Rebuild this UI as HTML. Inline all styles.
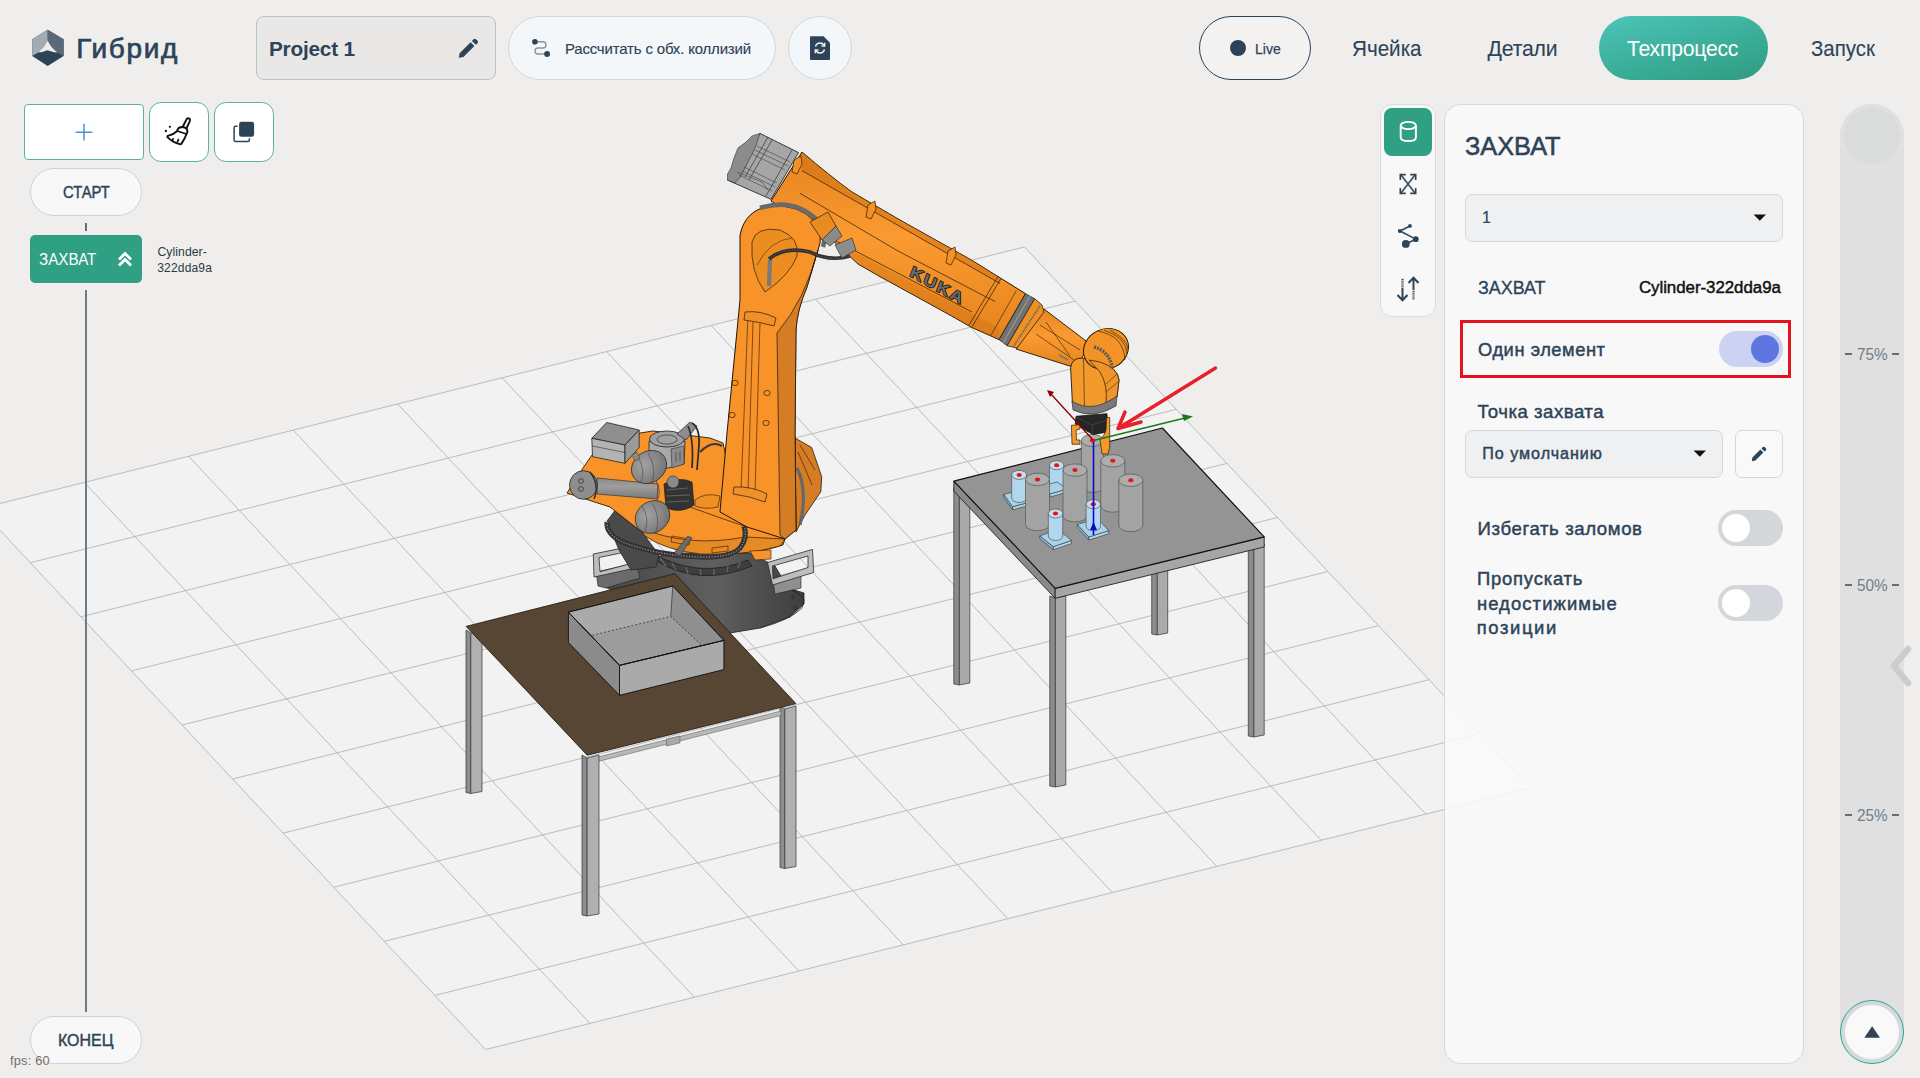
<!DOCTYPE html>
<html><head><meta charset="utf-8"><style>
*{margin:0;padding:0;box-sizing:border-box}
html,body{width:1920px;height:1078px;overflow:hidden;background:#efeeec;font-family:"Liberation Sans",sans-serif;color:#2d4358}
.abs{position:absolute}
#scene{position:absolute;left:0;top:0;width:1920px;height:1078px}
.t{position:absolute;white-space:nowrap;line-height:1}

</style></head><body>
<svg id="scene" width="1920" height="1078" viewBox="0 0 1920 1078">
<polygon points="-20.2,508.6 1024.5,247.0 1530.2,787.9 485.5,1049.5" fill="#f2f2f2"/>
<path d="M-20.2,508.6L1024.5,247.0M-20.2,508.6L485.5,1049.5M30.4,562.7L1075.1,301.1M84.3,482.4L590.0,1023.3M80.9,616.8L1125.6,355.2M188.7,456.3L694.4,997.2M131.5,670.9L1176.2,409.3M293.2,430.1L798.9,971.0M182.1,725.0L1226.8,463.4M397.7,404.0L903.4,944.9M232.7,779.0L1277.3,517.5M502.2,377.8L1007.9,918.7M283.2,833.1L1327.9,571.5M606.6,351.6L1112.3,892.5M333.8,887.2L1378.5,625.6M711.1,325.5L1216.8,866.4M384.4,941.3L1429.1,679.7M815.6,299.3L1321.3,840.2M434.9,995.4L1479.6,733.8M920.0,273.2L1425.7,814.1M485.5,1049.5L1530.2,787.9M1024.5,247.0L1530.2,787.9" stroke="#b4b4b4" stroke-width="0.9" fill="none"/>
<polygon points="1151.7,560.0 1157.3,562.0 1157.3,635.0 1151.7,634.0" fill="#8c8c8c" stroke="#333" stroke-width="0.7" stroke-linejoin="round" />
<polygon points="1157.3,562.0 1167.7,560.0 1167.7,633.0 1157.3,635.0" fill="#aaaaaa" stroke="#333" stroke-width="0.7" stroke-linejoin="round" />
<polygon points="953.8,488.0 959.4,490.0 959.4,685.0 953.8,684.0" fill="#8c8c8c" stroke="#333" stroke-width="0.7" stroke-linejoin="round" />
<polygon points="959.4,490.0 969.8,488.0 969.8,683.0 959.4,685.0" fill="#aaaaaa" stroke="#333" stroke-width="0.7" stroke-linejoin="round" />
<polygon points="1248.3,544.0 1253.9,546.0 1253.9,737.0 1248.3,736.0" fill="#8c8c8c" stroke="#333" stroke-width="0.7" stroke-linejoin="round" />
<polygon points="1253.9,546.0 1264.2,544.0 1264.2,735.0 1253.9,737.0" fill="#aaaaaa" stroke="#333" stroke-width="0.7" stroke-linejoin="round" />
<polygon points="1049.8,596.0 1055.4,598.0 1055.4,787.0 1049.8,786.0" fill="#8c8c8c" stroke="#333" stroke-width="0.7" stroke-linejoin="round" />
<polygon points="1055.4,598.0 1065.8,596.0 1065.8,785.0 1055.4,787.0" fill="#aaaaaa" stroke="#333" stroke-width="0.7" stroke-linejoin="round" />
<polygon points="953.8,481.1 1055.2,588.3 1055.2,598.3 953.8,491.1" fill="#8a8a8a" stroke="#222" stroke-width="0.9" stroke-linejoin="round" />
<polygon points="1055.2,588.3 1264.2,536.9 1264.2,546.9 1055.2,598.3" fill="#a6a6a6" stroke="#222" stroke-width="0.9" stroke-linejoin="round" />
<polygon points="953.8,481.1 1162.4,428.0 1264.2,536.9 1055.2,588.3" fill="#949494" stroke="#111" stroke-width="1.2" stroke-linejoin="round" />
<defs></defs>
<path d="M1081.4,440.4 L1081.4,486.4 A11.0,6.0 0 0 0 1103.4,486.4 L1103.4,440.4 Z" fill="#a3a3a3" stroke="#555" stroke-width="0.7" stroke-linejoin="round" />
<ellipse cx="1092.4" cy="440.4" rx="11.0" ry="6.0" fill="#adadad" stroke="#555" stroke-width="0.7"/>
<ellipse cx="1092.4" cy="440.4" rx="2.6" ry="2" fill="#e8121b"/>
<defs></defs>
<path d="M1049.4,465.2 L1049.4,488.2 A7.2,4.5 0 0 0 1063.8,488.2 L1063.8,465.2 Z" fill="#b0d7ee" stroke="#555" stroke-width="0.7" stroke-linejoin="round" />
<ellipse cx="1056.6" cy="465.2" rx="7.2" ry="4.5" fill="#bfe0f2" stroke="#555" stroke-width="0.7"/>
<ellipse cx="1056.6" cy="465.2" rx="2.6" ry="2" fill="#e8121b"/>
<polygon points="1040.0,486.5 1050.0,494.0 1050.0,497.0 1040.0,489.5" fill="#8fb8d0" stroke="#333" stroke-width="0.6" stroke-linejoin="round" />
<polygon points="1050.0,494.0 1067.0,489.0 1067.0,492.0 1050.0,497.0" fill="#b4daee" stroke="#333" stroke-width="0.6" stroke-linejoin="round" />
<polygon points="1040.0,486.5 1057.0,482.0 1067.0,489.0 1050.0,494.0" fill="#a9d1e8" stroke="#333" stroke-width="0.6" stroke-linejoin="round" />
<defs></defs>
<path d="M1100.8,460.8 L1100.8,506.0 A12.0,6.2 0 0 0 1124.8,506.0 L1124.8,460.8 Z" fill="#a3a3a3" stroke="#555" stroke-width="0.7" stroke-linejoin="round" />
<ellipse cx="1112.8" cy="460.8" rx="12.0" ry="6.2" fill="#adadad" stroke="#555" stroke-width="0.7"/>
<ellipse cx="1112.8" cy="460.8" rx="2.6" ry="2" fill="#e8121b"/>
<defs></defs>
<path d="M1063.0,470.1 L1063.0,515.7 A12.0,6.2 0 0 0 1087.0,515.7 L1087.0,470.1 Z" fill="#a3a3a3" stroke="#555" stroke-width="0.7" stroke-linejoin="round" />
<ellipse cx="1075.0" cy="470.1" rx="12.0" ry="6.2" fill="#adadad" stroke="#555" stroke-width="0.7"/>
<ellipse cx="1075.0" cy="470.1" rx="2.6" ry="2" fill="#e8121b"/>
<polygon points="1003.8,494.4 1012.6,506.8 1012.6,509.8 1003.8,497.4" fill="#8fb8d0" stroke="#333" stroke-width="0.6" stroke-linejoin="round" />
<polygon points="1012.6,506.8 1030.0,502.0 1030.0,505.0 1012.6,509.8" fill="#b4daee" stroke="#333" stroke-width="0.6" stroke-linejoin="round" />
<polygon points="1003.8,494.4 1021.0,490.0 1030.0,502.0 1012.6,506.8" fill="#a9d1e8" stroke="#333" stroke-width="0.6" stroke-linejoin="round" />
<defs></defs>
<path d="M1011.7,474.9 L1011.7,498.0 A7.5,4.5 0 0 0 1026.7,498.0 L1026.7,474.9 Z" fill="#b0d7ee" stroke="#555" stroke-width="0.7" stroke-linejoin="round" />
<ellipse cx="1019.2" cy="474.9" rx="7.5" ry="4.5" fill="#bfe0f2" stroke="#555" stroke-width="0.7"/>
<ellipse cx="1019.2" cy="474.9" rx="2.6" ry="2" fill="#e8121b"/>
<defs></defs>
<path d="M1025.5,479.4 L1025.5,524.5 A12.0,6.2 0 0 0 1049.5,524.5 L1049.5,479.4 Z" fill="#a3a3a3" stroke="#555" stroke-width="0.7" stroke-linejoin="round" />
<ellipse cx="1037.5" cy="479.4" rx="12.0" ry="6.2" fill="#adadad" stroke="#555" stroke-width="0.7"/>
<ellipse cx="1037.5" cy="479.4" rx="2.6" ry="2" fill="#e8121b"/>
<defs></defs>
<path d="M1118.8,480.2 L1118.8,525.4 A12.0,6.2 0 0 0 1142.8,525.4 L1142.8,480.2 Z" fill="#a3a3a3" stroke="#555" stroke-width="0.7" stroke-linejoin="round" />
<ellipse cx="1130.8" cy="480.2" rx="12.0" ry="6.2" fill="#adadad" stroke="#555" stroke-width="0.7"/>
<ellipse cx="1130.8" cy="480.2" rx="2.6" ry="2" fill="#e8121b"/>
<polygon points="1077.3,524.5 1088.8,537.0 1088.8,540.0 1077.3,527.5" fill="#8fb8d0" stroke="#333" stroke-width="0.6" stroke-linejoin="round" />
<polygon points="1088.8,537.0 1108.7,530.7 1108.7,533.7 1088.8,540.0" fill="#b4daee" stroke="#333" stroke-width="0.6" stroke-linejoin="round" />
<polygon points="1077.3,524.5 1097.7,518.3 1108.7,530.7 1088.8,537.0" fill="#a9d1e8" stroke="#333" stroke-width="0.6" stroke-linejoin="round" />
<defs></defs>
<path d="M1086.1,504.2 L1086.1,526.3 A7.2,4.5 0 0 0 1100.5,526.3 L1100.5,504.2 Z" fill="#b0d7ee" stroke="#555" stroke-width="0.7" stroke-linejoin="round" />
<ellipse cx="1093.3" cy="504.2" rx="7.2" ry="4.5" fill="#bfe0f2" stroke="#555" stroke-width="0.7"/>
<ellipse cx="1093.3" cy="504.2" rx="2.6" ry="2" fill="#e8121b"/>
<polygon points="1039.8,536.0 1053.4,546.7 1053.4,549.7 1039.8,539.0" fill="#8fb8d0" stroke="#333" stroke-width="0.6" stroke-linejoin="round" />
<polygon points="1053.4,546.7 1071.5,540.5 1071.5,543.5 1053.4,549.7" fill="#b4daee" stroke="#333" stroke-width="0.6" stroke-linejoin="round" />
<polygon points="1039.8,536.0 1057.8,529.0 1071.5,540.5 1053.4,546.7" fill="#a9d1e8" stroke="#333" stroke-width="0.6" stroke-linejoin="round" />
<defs></defs>
<path d="M1048.3,513.5 L1048.3,536.0 A7.2,4.5 0 0 0 1062.7,536.0 L1062.7,513.5 Z" fill="#b0d7ee" stroke="#555" stroke-width="0.7" stroke-linejoin="round" />
<ellipse cx="1055.5" cy="513.5" rx="7.2" ry="4.5" fill="#bfe0f2" stroke="#555" stroke-width="0.7"/>
<ellipse cx="1055.5" cy="513.5" rx="2.6" ry="2" fill="#e8121b"/>
<defs><linearGradient id="baseg" x1="0" y1="0" x2="1" y2="0"><stop offset="0" stop-color="#3f3f3f"/><stop offset="0.6" stop-color="#5c5c5c"/><stop offset="1" stop-color="#3c3c3c"/></linearGradient><linearGradient id="armg" x1="0" y1="0" x2="0" y2="1"><stop offset="0" stop-color="#e6841e"/><stop offset="0.45" stop-color="#fa9a30"/><stop offset="1" stop-color="#e5841c"/></linearGradient></defs>
<defs><linearGradient id="pedg" x1="0" y1="0" x2="1" y2="0"><stop offset="0" stop-color="#474747"/><stop offset="0.55" stop-color="#5f5f5f"/><stop offset="0.8" stop-color="#4d4d4d"/><stop offset="1" stop-color="#3e3e3e"/></linearGradient></defs>
<path d="M605,587 L640,562 L672,553 L750,553 L775,566 L788,588 L804,593 L804,604 L790,617 L760,628 L730,633 L690,626 Z" fill="url(#pedg)" stroke="#1e1e1e" stroke-width="0.8" stroke-linejoin="round" />
<path d="M787,589 Q800,592 804,600 L802,608 Q790,620 760,628" fill="none" stroke="#222" stroke-width="0.8" stroke-linejoin="round" />
<circle cx="793" cy="597" r="1.6" fill="none" stroke="#222" stroke-width="0.6"/><circle cx="795" cy="608" r="1.6" fill="none" stroke="#222" stroke-width="0.6"/>
<path d="M652,553 Q700,580 748,560 L752,566 Q700,588 655,560 Z" fill="#3e3e3e" stroke="#1a1a1a" stroke-width="0.7" stroke-linejoin="round" />
<path d="M660,558 L666,566 M672,563 L676,570 M686,567 L688,574 M700,569 L701,575 M714,569 L714,575 M728,566 L727,572 M740,562 L738,568" fill="none" stroke="#666666" stroke-width="1.3" stroke-linejoin="round" />
<path d="M596,572 L636,563 L640,578 L606,588 L598,586 Z" fill="#6b6b6b" stroke="#222" stroke-width="0.6" stroke-linejoin="round" />
<path d="M593.3,554.0 L637.5,545.0 L638.0,567.5 L594.0,577.0 Z M599.0,557.5 L633.0,550.5 L633.0,563.0 L600.0,571.7 Z" fill="#bdbdbd" fill-rule="evenodd" stroke="#2a2a2a" stroke-width="0.8"/>
<path d="M773,581 L801,575 L801,588 L775,594 Z" fill="#8f8f8f" stroke="#222" stroke-width="0.6" stroke-linejoin="round" />
<path d="M767.5,562.5 L812.5,549.4 L813.7,572.5 L772.5,585.0 Z M772.5,566.0 L808.0,556.0 L808.0,567.5 L773.0,578.7 Z" fill="#bdbdbd" fill-rule="evenodd" stroke="#2a2a2a" stroke-width="0.8"/>
<path d="M607,521 L616,509 L631,512 L648,540 L659,555 L656,567 L631,570 L619,550 Z" fill="#4a4a4a" stroke="#1e1e1e" stroke-width="0.7" stroke-linejoin="round" />
<path d="M567,493 L583,468 L592,455 L640,433 L653,431 L710,438 L723,443 L740,520 L785,539 L783,545 Q760,553 727,553 L677,550 L643,533 L610,507 Z" fill="#f8932a" stroke="#2a1a08" stroke-width="0.9" stroke-linejoin="round" />
<path d="M795,438 L811.7,447.5 L821.7,476.7 L820.8,491.7 L805,515 L796,532 Z" fill="#d47d24" stroke="#2a1a08" stroke-width="0.8" stroke-linejoin="round" />
<path d="M797,468 Q808,490 800,525" fill="none" stroke="#666" stroke-width="3.2" stroke-linejoin="round" />
<path d="M800,445 L815,470 M798,452 L812,485" fill="none" stroke="#2a1a08" stroke-width="0.6" stroke-linejoin="round" />
<path d="M640,528 Q690,548 745,537 L785,539 L780,546 Q745,556 700,554 Q665,550 645,536 Z" fill="#e68a24" stroke="#2a1a08" stroke-width="0.7" stroke-linejoin="round" />
<path d="M672,536 L690,539 L689,545 L671,542 Z M712,548 L728,546 L728,551 L712,553 Z" fill="none" stroke="#2a1a08" stroke-width="0.6" stroke-linejoin="round" />
<path d="M750,551 L771,550 L771,559 L755,560 Z" fill="#f8932a" stroke="#2a1a08" stroke-width="0.6" stroke-linejoin="round" />
<path d="M607,522 Q606,535 625,543 Q660,556 700,557 Q730,558 740,548 Q748,538 744,526" fill="none" stroke="#333333" stroke-width="5.2" stroke-linejoin="round" />
<path d="M607,522 Q606,535 625,543 Q660,556 700,557 Q730,558 740,548 Q748,538 744,526" fill="none" stroke="#8a8a8a" stroke-width="1.4" stroke-linejoin="round" stroke-dasharray="1.2 1.6"/>
<path d="M674,553 L688,536 L692,538 L680,556 Z" fill="#6a6a6a" stroke="#222" stroke-width="0.5" stroke-linejoin="round" />
<path d="M664,484 Q680,476 692,482 L694,505 Q682,514 666,508 Z" fill="#333333" stroke="#111" stroke-width="0.6" stroke-linejoin="round" />
<path d="M690,507 Q720,518 747,527" fill="none" stroke="#2a1a08" stroke-width="0.7" stroke-linejoin="round" />
<path d="M695,500 Q705,492 720,496 L718,507 Q705,510 695,506 Z" fill="#ee8f26" stroke="#2a1a08" stroke-width="0.6" stroke-linejoin="round" />
<path d="M667,490 L688,488 M666,496 L690,495 M667,502 L689,501" fill="none" stroke="#777" stroke-width="0.7" stroke-linejoin="round" />
<polygon points="591.8,438.3 606.7,422.5 639.2,430.0 625.0,445.0" fill="#8f8f8f" stroke="#222" stroke-width="0.8" stroke-linejoin="round" />
<polygon points="591.8,438.3 625.0,445.0 625.0,463.3 592.5,456.7" fill="#b3b3b3" stroke="#222" stroke-width="0.8" stroke-linejoin="round" />
<path d="M592.2,446 L625,452.5" fill="none" stroke="#333" stroke-width="0.6" stroke-linejoin="round" />
<polygon points="625.0,445.0 639.2,430.0 639.2,447.5 625.0,463.3" fill="#9a9a9a" stroke="#222" stroke-width="0.8" stroke-linejoin="round" />
<path d="M649,441 L649,466 L660,470 L684,464 L685,441 Z" fill="#a9a9a9" stroke="#222" stroke-width="0.8" stroke-linejoin="round" />
<path d="M671,449 L684,446 L684,464 L672,468 Z" fill="#8c8c8c" stroke="#333" stroke-width="0.6" stroke-linejoin="round" />
<path d="M676,452 L676,462 M680,451 L680,461" fill="none" stroke="#333" stroke-width="0.6" stroke-linejoin="round" />
<ellipse cx="667" cy="439" rx="17.5" ry="8" fill="#a0a0a0" stroke="#222" stroke-width="0.8"/>
<ellipse cx="667" cy="439.5" rx="10" ry="4.6" fill="none" stroke="#333" stroke-width="0.7"/>
<path d="M677,434 L690,422 L697,426 L686,440 Z" fill="#8d8d8d" stroke="#222" stroke-width="0.7" stroke-linejoin="round" />
<path d="M692,423 Q700,428 699,445 L697,470 M688,426 Q694,440 692,468" fill="none" stroke="#2a2a2a" stroke-width="1.7" stroke-linejoin="round" />
<path d="M700,452 Q712,440 722,446" fill="none" stroke="#3a3a3a" stroke-width="2.2" stroke-linejoin="round" />
<defs><linearGradient id="tubeg" x1="0" y1="0" x2="0" y2="1"><stop offset="0" stop-color="#8a8a8a"/><stop offset="0.4" stop-color="#9e9e9e"/><stop offset="1" stop-color="#777"/></linearGradient></defs>
<path d="M597,478 L658,484 L657,499 L597,494 Z" fill="url(#tubeg)" stroke="#333" stroke-width="0.7" stroke-linejoin="round" />
<path d="M656,481 Q662,491 657,501" fill="none" stroke="#333" stroke-width="0.7" stroke-linejoin="round" />
<ellipse cx="583.5" cy="485" rx="14" ry="14.3" fill="#8e8e8e" stroke="#222" stroke-width="0.8"/>
<path d="M590,472 Q600,485 594,499" fill="none" stroke="#333" stroke-width="1.6" stroke-linejoin="round" />
<circle cx="581" cy="481" r="2.4" fill="none" stroke="#333" stroke-width="0.8"/><circle cx="581" cy="489" r="2.4" fill="none" stroke="#333" stroke-width="0.8"/>
<defs><radialGradient id="sph" cx="0.4" cy="0.35" r="0.75"><stop offset="0" stop-color="#a3a3a3"/><stop offset="1" stop-color="#707070"/></radialGradient></defs>
<ellipse cx="649" cy="467" rx="18.5" ry="15.5" transform="rotate(-35 649 467)" fill="url(#sph)" stroke="#333" stroke-width="0.8"/>
<path d="M638,457 Q646,470 641,482 M648,453 Q657,467 652,483" fill="none" stroke="#444" stroke-width="0.6" stroke-linejoin="round" />
<path d="M632,455 L637,452 L640,458 L635,461 Z" fill="#8a8a8a" stroke="#333" stroke-width="0.5" stroke-linejoin="round" />
<ellipse cx="652.5" cy="517" rx="18" ry="15.5" transform="rotate(-35 652.5 517)" fill="url(#sph)" stroke="#333" stroke-width="0.8"/>
<path d="M642,506 Q650,519 645,531 M652,503 Q661,517 656,532" fill="none" stroke="#444" stroke-width="0.6" stroke-linejoin="round" />
<circle cx="673" cy="482" r="6" fill="#8a8a8a" stroke="#333" stroke-width="0.7"/>
<path d="M802,152 Q830,176 852,192 L900,220 L971.4,260 L1001,278.4 L1025.5,293.7 L999,339.6 L971.4,327.3 L950,315.1 L880,276.6 L858,264 L830,238 L771,201 Z" fill="url(#armg)" stroke="#1f1408" stroke-width="1.0" stroke-linejoin="round" />
<path d="M802,152 Q830,176 852,192 L900,220 L971.4,260 L1001,278.4 L1000,283.5 L976.4,270 L801.9,170.6 Z" fill="#c96d12" stroke="none" stroke-width="0" stroke-linejoin="round" opacity="0.45"/>
<path d="M830,238 L890,271 L972,314 L999,328 L999,339.6 L971.4,327.3 L950,315.1 L880,276.6 L858,264 Z" fill="#c96d12" stroke="none" stroke-width="0" stroke-linejoin="round" opacity="0.35"/>
<path d="M801.9,170.6 L976.4,270 L1000,283.5" fill="none" stroke="#2a1a08" stroke-width="0.7" stroke-linejoin="round" />
<path d="M800,193.3 L898,251 L984.3,296 L995,301.5" fill="none" stroke="#2a1a08" stroke-width="0.7" stroke-linejoin="round" />
<path d="M800,222 L890,269 L972,312" fill="none" stroke="#2a1a08" stroke-width="0.7" stroke-linejoin="round" />
<path d="M1001,278.4 L972,326.8 M998,276.6 L969,325" fill="none" stroke="#2a1a08" stroke-width="0.7" stroke-linejoin="round" />
<path d="M1016.3,290.6 L990.8,335.5" fill="none" stroke="#2a1a08" stroke-width="0.6" stroke-linejoin="round" />
<path d="M792,172 L794,160 L801,156 L802,164 L797,174 Z" fill="#f39126" stroke="#2a1a08" stroke-width="0.7" stroke-linejoin="round" />
<path d="M866,217 L868,205 L875,201 L876,209 L871,219 Z" fill="#f39126" stroke="#2a1a08" stroke-width="0.7" stroke-linejoin="round" />
<path d="M946,263 L948,251 L955,247 L956,255 L951,265 Z" fill="#f39126" stroke="#2a1a08" stroke-width="0.7" stroke-linejoin="round" />
<polygon points="760.0,133.4 798.5,152.6 771.0,199.3 727.5,180.1" fill="#a6a6a6" stroke="#2a2a2a" stroke-width="0.9" stroke-linejoin="round" />
<path d="M760,133.4 L752,136 L746,142 L738,148 L734,158 L731,168 L727.5,174 L727.5,180.1 L735,183 L741,176 L748,162 L755,148 Z" fill="#8c8c8c" stroke="#333" stroke-width="0.6" stroke-linejoin="round" />
<path d="M757,146 L790,162 M755,150 L788,166 M752,154 L785,170 M744,167 L777,183 M742,171 L775,187 M739,175 L772,191" fill="none" stroke="#3a3a3a" stroke-width="0.55" stroke-linejoin="round" />
<path d="M768,137 L745,177 M772,140 L749,180 M792,150 L766,196" fill="none" stroke="#333" stroke-width="0.7" stroke-linejoin="round" />
<path d="M737,172 L762,182 L768,190" fill="none" stroke="#444" stroke-width="0.6" stroke-linejoin="round" />
<text x="0" y="0" transform="matrix(1.05,0.582,-0.368,0.93,909,275.8)" font-family="Liberation Sans" font-weight="bold" font-size="15.5" fill="#6a6a6a" stroke="#151515" stroke-width="1.5" paint-order="stroke" stroke-linejoin="round" letter-spacing="1.4">KUKA</text>
<polygon points="1025.5,293.7 1034.7,298.8 1007.1,345.7 999.0,339.6" fill="#727272" stroke="#222" stroke-width="0.8" stroke-linejoin="round" />
<path d="M1030,296 L1003,343" fill="none" stroke="#9a9a9a" stroke-width="1.2" stroke-linejoin="round" />
<polygon points="1044.0,309.0 1090.0,344.0 1076.0,368.0 1016.0,349.0" fill="url(#armg)" stroke="#1f1408" stroke-width="0.9" stroke-linejoin="round" />
<path d="M1040,325 L1080,350 M1036,334 L1074,360 M1046,322 L1070,356" fill="none" stroke="#2a1a08" stroke-width="0.6" stroke-linejoin="round" />
<path d="M1059,355 L1068,360" fill="none" stroke="#777" stroke-width="2" stroke-linejoin="round" />
<polygon points="1034.7,298.8 1042.0,305.0 1044.0,312.0 1017.0,348.0 1007.1,345.7" fill="#f09024" stroke="#222" stroke-width="0.8" stroke-linejoin="round" />
<path d="M1040,306 L1013,347" fill="none" stroke="#666" stroke-width="1.8" stroke-linejoin="round" stroke-dasharray="1.5 1"/>
<path d="M740,235 Q745,210 770,206 Q800,204 815,222 Q824,236 818,250 L807,287 Q797,310 796,330 L795,433 L796,530 L785,539 L747,527 L720,512 L727,433 L740,300 Z" fill="#f8932a" stroke="#1f1408" stroke-width="1.0" stroke-linejoin="round" />
<path d="M777,333 L780,535 L785,539 L796,530 L795,433 L796,330 Q797,310 807,287 L818,250 Q805,300 777,333 Z" fill="#d47d24" stroke="#1f1408" stroke-width="0.7" stroke-linejoin="round" />
<path d="M760,208 Q795,197 819,222 Q827,234 823,247" fill="none" stroke="#6a6a6a" stroke-width="4.5" stroke-linejoin="round" />
<path d="M752,242 Q756,226 780,230 Q800,238 797,256 Q790,275 765,292 Q750,272 752,242 Z" fill="#ec8d22" stroke="#2a1a08" stroke-width="0.7" stroke-linejoin="round" />
<path d="M757,265 Q770,240 792,238" fill="none" stroke="#2a1a08" stroke-width="0.5" stroke-linejoin="round" />
<path d="M748,315 L741,490 M753,322 L748,492 M760,322 L755,492" fill="none" stroke="#2a1a08" stroke-width="0.6" stroke-linejoin="round" />
<path d="M745,312 Q760,310 776,318 L774,326 Q760,322 744,320 Z" fill="#f0902a" stroke="#2a1a08" stroke-width="0.7" stroke-linejoin="round" />
<path d="M734,487 Q752,486 767,494 L765,502 Q750,496 733,494 Z" fill="#f0902a" stroke="#2a1a08" stroke-width="0.7" stroke-linejoin="round" />
<ellipse cx="735" cy="383" rx="3.2" ry="2.6" fill="none" stroke="#2a1a08" stroke-width="0.7"/>
<ellipse cx="732" cy="415" rx="3.2" ry="2.6" fill="none" stroke="#2a1a08" stroke-width="0.7"/>
<ellipse cx="767" cy="393" rx="3.2" ry="2.6" fill="none" stroke="#2a1a08" stroke-width="0.7"/>
<ellipse cx="766" cy="423" rx="3.2" ry="2.6" fill="none" stroke="#2a1a08" stroke-width="0.7"/>
<path d="M770,260 L769,286" fill="none" stroke="#7a7a7a" stroke-width="4.2" stroke-linejoin="round" />
<path d="M769,259 Q785,246 810,252 Q830,262 850,256" fill="none" stroke="#2e2e2e" stroke-width="3.6" stroke-linejoin="round" />
<path d="M769,259 Q785,246 810,252 Q830,262 850,256" fill="none" stroke="#777" stroke-width="1" stroke-linejoin="round" stroke-dasharray="1 1.5"/>
<path d="M835,245 L852,238 L856,250 L842,258 Z" fill="#8d8d8d" stroke="#333" stroke-width="0.7" stroke-linejoin="round" />
<path d="M810,222 L828,212 L836,226 L822,240 Z" fill="#e98a22" stroke="#2a1a08" stroke-width="0.7" stroke-linejoin="round" />
<path d="M822,240 L836,226 L842,236 L830,246 Z" fill="#8a8a8a" stroke="#222" stroke-width="0.6" stroke-linejoin="round" />
<path d="M1070.6,367.6 Q1072,358 1082,358 L1100,362 Q1118,368 1119,380 L1117,397 Q1108,408 1091,409 Q1074,407 1072.4,402.9 Z" fill="#f39a2c" stroke="#1f1408" stroke-width="0.9" stroke-linejoin="round" />
<ellipse cx="1106" cy="349" rx="23" ry="20" transform="rotate(-25 1106 349)" fill="#f39226" stroke="#1f1408" stroke-width="0.9"/>
<path d="M1098,331 Q1124,336 1125,360 M1104,330 Q1127,338 1127,354 M1110,330 Q1128,340 1128,350" fill="none" stroke="#2a1a08" stroke-width="0.6" stroke-linejoin="round" />
<path d="M1094,347 Q1112,352 1113,374" fill="none" stroke="#5a5a5a" stroke-width="3.4" stroke-linejoin="round" stroke-dasharray="2 1.1"/>
<path d="M1089,360 L1100,362 Q1118,368 1119,380 L1117,397 L1106,403 Q1108,385 1100,372 Z" fill="#ef9429" stroke="#1f1408" stroke-width="0.7" stroke-linejoin="round" />
<path d="M1083.5,359 L1084.5,408" fill="none" stroke="#2a1a08" stroke-width="0.6" stroke-linejoin="round" />
<path d="M1106,384 L1117,374 M1106,392 L1118,382" fill="none" stroke="#2a1a08" stroke-width="0.5" stroke-linejoin="round" />
<path d="M1072,401 Q1092,414 1117,396 L1116,406 Q1093,420 1073,410 Z" fill="#7a7a7a" stroke="#333" stroke-width="0.7" stroke-linejoin="round" />
<path d="M1076,416.3 L1107,413.7 L1107.8,432 L1092.9,434.5 L1075.3,424 Z" fill="#262626" stroke="#111" stroke-width="0.8" stroke-linejoin="round" />
<path d="M1076,417 L1092,425 L1107,420 M1092,425 L1093,434" fill="none" stroke="#4a4a4a" stroke-width="0.7" stroke-linejoin="round" />
<path d="M1071.4,425.4 L1080,424.5 L1080,429 L1076,430 L1076.5,440 L1080,440 L1080,444.2 L1072,444.2 Z" fill="#f39a2a" stroke="#2a1a08" stroke-width="0.7" stroke-linejoin="round" />
<path d="M1106.5,417.6 L1109.7,417.6 L1109.7,447 L1108,454 L1102,454 L1100,440 L1104,435 L1106,430 Z" fill="#f39a2a" stroke="#2a1a08" stroke-width="0.7" stroke-linejoin="round" />
<polygon points="466.0,630.0 470.8,633.0 470.8,793.5 466.0,792.5" fill="#8e8e8e" stroke="#333" stroke-width="0.7" stroke-linejoin="round" />
<polygon points="470.8,633.0 482.0,630.0 482.0,791.5 470.8,793.5" fill="#b0b0b0" stroke="#333" stroke-width="0.7" stroke-linejoin="round" />
<polygon points="780.0,706.0 784.8,709.0 784.8,868.5 780.0,867.5" fill="#8e8e8e" stroke="#333" stroke-width="0.7" stroke-linejoin="round" />
<polygon points="784.8,709.0 796.0,706.0 796.0,866.5 784.8,868.5" fill="#b0b0b0" stroke="#333" stroke-width="0.7" stroke-linejoin="round" />
<polygon points="598.0,757.0 781.0,711.0 781.0,715.5 598.0,761.5" fill="#b8b8b8" stroke="#555" stroke-width="0.5" stroke-linejoin="round" />
<polygon points="666.5,739.0 680.0,736.0 680.0,743.0 666.5,746.0" fill="#a8a8a8" stroke="#555" stroke-width="0.5" stroke-linejoin="round" />
<polygon points="582.0,755.0 587.1,758.0 587.1,916.0 582.0,915.0" fill="#8e8e8e" stroke="#333" stroke-width="0.7" stroke-linejoin="round" />
<polygon points="587.1,758.0 599.0,755.0 599.0,914.0 587.1,916.0" fill="#b0b0b0" stroke="#333" stroke-width="0.7" stroke-linejoin="round" />
<polygon points="466.1,626.4 674.9,573.6 795.9,703.6 587.2,755.2" fill="#574633" stroke="#2a2018" stroke-width="0.9" stroke-linejoin="round" />
<polygon points="568.4,612.2 672.8,586.1 723.9,640.4 619.5,665.4" fill="#9c9c9c" stroke="#111" stroke-width="0.9" stroke-linejoin="round" />
<polygon points="568.4,612.2 672.8,586.1 670.7,616.4 592.4,635.2" fill="#aaaaaa" stroke="none" stroke-width="0" stroke-linejoin="round" />
<polygon points="672.8,586.1 723.9,640.4 701.0,644.6 670.7,616.4" fill="#8f8f8f" stroke="none" stroke-width="0" stroke-linejoin="round" />
<path d="M592.4,635.2 L670.7,616.4 L701,644.6" fill="none" stroke="#222" stroke-width="0.7" stroke-linejoin="round" stroke-dasharray="2 2"/>
<path d="M672.8,586.1 L670.7,616.4" fill="none" stroke="#222" stroke-width="0.6" stroke-linejoin="round" />
<polygon points="568.4,612.2 619.5,665.4 619.5,695.3 568.4,642.5" fill="#8b8b8b" stroke="#111" stroke-width="0.9" stroke-linejoin="round" />
<polygon points="619.5,665.4 723.9,640.4 723.9,669.6 619.5,695.3" fill="#aaaaaa" stroke="#111" stroke-width="0.9" stroke-linejoin="round" />
<polygon points="568.4,612.2 672.8,586.1 723.9,640.4 619.5,665.4" fill="none" stroke="#111" stroke-width="1.0" stroke-linejoin="round" />
<path d="M1093.5,440.5 L1050,393" stroke="#8b0000" stroke-width="1.3"/>
<path d="M1047,390 L1054,392 L1050,397 Z" fill="#8b0000"/>
<path d="M1093.5,440.5 L1185,418" stroke="#1a7a1a" stroke-width="1.3"/>
<path d="M1193,416.5 L1182,414 L1184,421 Z" fill="#1a7a1a"/>
<path d="M1093.5,440.5 L1093.5,535" stroke="#0a0ad0" stroke-width="1.6"/>
<path d="M1093.5,522 L1090,530 L1097,530 Z" fill="#0a0ad0"/>
<circle cx="1093.5" cy="440.5" r="1.8" fill="#e01010"/>
<path d="M1215.5,368 L1118,428.5 M1118,428.5 L1125,412 M1118,428.5 L1141,422" stroke="#e8202a" stroke-width="3.5" stroke-linecap="round" fill="none"/>
</svg>
<!-- header -->
<svg class="abs" style="left:0;top:0" width="80" height="80" viewBox="0 0 80 80">
  <polygon points="47.7,29.8 63.6,39.2 63.6,56.1 47.7,65.9 32.2,56.1 32.2,39.2" fill="#2d4358"/>
  <path d="M47.7,29.8 L32.2,39.2 L32.2,56.1 L38.5,52.3 Q44.5,47 47.7,40.5 Z" fill="#a3acb4"/>
  <path d="M47.7,29.8 L63.6,39.2 L63.6,56.1 L57.3,52.6 Q50.5,47 47.7,40.5 Z" fill="#5b6a78"/>
  <path d="M47.7,40.5 Q44.5,47 38.5,52.3 L41.3,52.3 L47.5,50.2 L54,52.2 L57.3,52.6 Q50.5,47 47.7,40.5 Z" fill="#eeeeec"/>
</svg>
<div class="t" style="left:76.3px;top:35.3px;font-size:27.98px;letter-spacing:1.66px;font-weight:normal;color:#2d4358;-webkit-text-stroke:0.7px #2d4358;">Гибрид</div>
<div class="abs" style="left:256px;top:16px;width:240px;height:64px;border:1px solid #b9c3cb;border-radius:8px;background:#eae8e6"></div>
<div class="t" style="left:268.9px;top:39.3px;font-size:20.78px;letter-spacing:-0.20px;font-weight:bold;color:#2d4358;">Project 1</div>
<svg class="abs" style="left:458px;top:37px" width="22" height="22" viewBox="0 0 22 22"><path d="M0.8,20.8 L1.6,16.2 L12.6,5.2 L16.4,9 L5.4,20 Z M13.9,3.9 L15.6,2.2 Q16.8,1.2 18,2.2 L19.6,3.8 Q20.6,5 19.6,6.2 L17.8,7.8 Z" fill="#2d4358"/></svg>

<div class="abs" style="left:508px;top:16px;width:268px;height:64px;border:1px solid #d3d7db;border-radius:32px;background:#f4f7fa"></div>
<svg class="abs" style="left:528px;top:36px" width="26" height="24" viewBox="0 0 26 24">
  <path d="M7,5.8 L15,5.8 Q18,5.8 18,9 Q18,12 15,12 L10,12 Q7,12 7,15 Q7,18 10,18 L19,18" stroke="#8797a3" stroke-width="1.4" fill="none"/>
  <circle cx="6.9" cy="5.8" r="2.8" fill="#2d4358"/><circle cx="19.1" cy="18" r="2.9" fill="#2d4358"/>
</svg>
<div class="t" style="left:564.9px;top:42.3px;font-size:14.97px;letter-spacing:-0.16px;font-weight:normal;color:#2d4358;-webkit-text-stroke:0.15px #2d4358;">Рассчитать с обх. коллизий</div>

<div class="abs" style="left:788px;top:16px;width:64px;height:64px;border:1px solid #d3d7db;border-radius:32px;background:#f4f7fa"></div>
<svg class="abs" style="left:808px;top:34px" width="24" height="28" viewBox="0 0 24 28">
  <path d="M2,3.2 Q2,2.2 3,2.2 L15.5,2.2 L22,8.7 L22,25 Q22,26 21,26 L3,26 Q2,26 2,25 Z" fill="#2d4358"/>
  <path d="M7.5,12.5 Q8.5,9 12.2,9 Q14.6,9 15.8,11" stroke="#f4f7fa" stroke-width="1.5" fill="none"/>
  <path d="M16.8,8.8 L16.6,12.3 L13.3,11.9" stroke="#f4f7fa" stroke-width="1.4" fill="none"/>
  <path d="M16.5,15.5 Q15.5,19 11.8,19 Q9.4,19 8.2,17" stroke="#f4f7fa" stroke-width="1.5" fill="none"/>
  <path d="M7.2,19.2 L7.4,15.7 L10.7,16.1" stroke="#f4f7fa" stroke-width="1.4" fill="none"/>
</svg>

<div class="abs" style="left:1199px;top:16px;width:112px;height:64px;border:1px solid #2d4358;border-radius:32px;background:#f3f2f1"></div>
<div class="abs" style="left:1230px;top:40px;width:16px;height:16px;border-radius:8px;background:#2d4358"></div>
<div class="t" style="left:1254.6px;top:41.3px;font-size:15.33px;font-weight:normal;color:#2d4358;-webkit-text-stroke:0.25px #2d4358;transform:scaleX(0.9164);transform-origin:0 0;">Live</div>
<div class="t" style="left:1351.5px;top:37.5px;font-size:21.22px;font-weight:normal;color:#2d4358;-webkit-text-stroke:0.1px #2d4358;transform:scaleX(0.9720);transform-origin:0 0;">Ячейка</div>
<div class="t" style="left:1487.5px;top:37.5px;font-size:21.22px;letter-spacing:-0.17px;font-weight:normal;color:#2d4358;-webkit-text-stroke:0.1px #2d4358;">Детали</div>
<div class="abs" style="left:1599px;top:16px;width:169px;height:64px;border-radius:32px;background:linear-gradient(165deg,#4ec4b8 0%,#3cb09c 50%,#2f9b80 100%)"></div>
<div class="t" style="left:1627.0px;top:37.5px;font-size:21.22px;letter-spacing:-0.26px;font-weight:normal;color:#ffffff;">Техпроцесс</div>
<div class="t" style="left:1810.8px;top:37.5px;font-size:21.22px;font-weight:normal;color:#2d4358;-webkit-text-stroke:0.1px #2d4358;transform:scaleX(0.9645);transform-origin:0 0;">Запуск</div>

<!-- left toolbar -->
<div class="abs" style="left:24px;top:104px;width:120px;height:56px;border:1px solid #5ab39c;border-radius:4px;background:#ffffff"></div>
<svg class="abs" style="left:74px;top:122px" width="20" height="20" viewBox="0 0 20 20"><path d="M10,1.8 V18.5 M1.6,10.2 H18.4" stroke="#4b8fd6" stroke-width="1.5"/></svg>
<div class="abs" style="left:149px;top:102px;width:60px;height:60px;border:1px solid #5ab39c;border-radius:12px;background:#ffffff"></div>
<svg class="abs" style="left:162px;top:116px" width="32" height="32" viewBox="0 0 32 32">
  <path d="M20.6,11 L24.6,3.2 Q25.8,1.6 27.4,2.6 Q28.6,3.6 27.8,5.2 L24.2,13" stroke="#111" stroke-width="1.9" fill="none" stroke-linejoin="round"/>
  <path d="M15.2,15 Q15.6,11.6 19.6,11 Q24.6,11 25.4,14.8 Q25.6,16.6 24.5,18" stroke="#111" stroke-width="1.9" fill="none" stroke-linejoin="round"/>
  <path d="M15.2,15 L24.5,18" stroke="#111" stroke-width="1.8" fill="none"/>
  <path d="M15.2,15 Q11,19 5.9,19.9 Q5,20.4 5.6,21.4 Q11,26.5 17.8,28.2 Q19,28.4 19.6,27.4 Q23,22.5 24.5,18" stroke="#111" stroke-width="1.9" fill="none" stroke-linejoin="round"/>
  <path d="M11.1,22.8 L10.3,24.4 M16.5,23.4 L15.4,25.8" stroke="#111" stroke-width="1.7" stroke-linecap="round"/>
  <circle cx="7.9" cy="10.8" r="1.15" fill="#111"/><circle cx="3.9" cy="15" r="1.15" fill="#111"/>
</svg>
<div class="abs" style="left:214px;top:102px;width:60px;height:60px;border:1px solid #5ab39c;border-radius:12px;background:#ffffff"></div>
<svg class="abs" style="left:230px;top:118px" width="28" height="28" viewBox="0 0 28 28">
  <path d="M7.6,8.3 H5.6 Q4.1,8.3 4.1,9.8 V22 Q4.1,23.5 5.6,23.5 H17.9 Q19.4,23.5 19.4,22 V20.2" fill="none" stroke="#2d4358" stroke-width="1.5"/>
  <rect x="9.1" y="3.8" width="15" height="15" rx="2.4" fill="#2d4358"/>
</svg>

<div class="abs" style="left:30px;top:168px;width:112px;height:48px;border:1px solid #cdd3d8;border-radius:24px;background:#f8f8f8"></div>
<div class="t" style="left:62.8px;top:184.3px;font-size:16.13px;font-weight:normal;color:#2d4358;-webkit-text-stroke:0.45px #2d4358;transform:scaleX(0.9156);transform-origin:0 0;">СТАРТ</div>
<div class="abs" style="left:85px;top:223px;width:2px;height:8px;background:#5f6f7d"></div>
<div class="abs" style="left:30px;top:235px;width:112px;height:48px;border-radius:5px;background:#30a085"></div>
<div class="t" style="left:39.4px;top:251.3px;font-size:16.42px;font-weight:normal;color:#ffffff;transform:scaleX(0.9280);transform-origin:0 0;">ЗАХВАТ</div>
<svg class="abs" style="left:117px;top:250px" width="16" height="18" viewBox="0 0 16 18"><path d="M2,9.5 L8,3.5 L14,9.5 M2,15.5 L8,9.5 L14,15.5" stroke="#fff" stroke-width="2.8" fill="none"/></svg>
<div class="t" style="left:157.5px;top:246.3px;font-size:12.21px;letter-spacing:0.06px;font-weight:normal;color:#2d3a44;">Cylinder-</div>
<div class="t" style="left:157.2px;top:261.6px;font-size:12.06px;letter-spacing:0.16px;font-weight:normal;color:#2d3a44;">322dda9a</div>
<div class="abs" style="left:85px;top:290px;width:2px;height:722px;background:#6b7b89"></div>
<div class="abs" style="left:30px;top:1016px;width:112px;height:48px;border:1px solid #cdd3d8;border-radius:24px;background:#f8f8f8"></div>
<div class="t" style="left:58.3px;top:1031.9px;font-size:17.30px;font-weight:normal;color:#2d4358;-webkit-text-stroke:0.45px #2d4358;transform:scaleX(0.9235);transform-origin:0 0;">КОНЕЦ</div>
<div class="t" style="left:10.0px;top:1054.8px;font-size:12.79px;letter-spacing:0.22px;font-weight:normal;color:#6f6f6f;">fps: 60</div>

<!-- right icons column -->
<div class="abs" style="left:1380px;top:104px;width:56px;height:213px;border:1px solid #dadcde;border-radius:12px;background:#f8f8f8"></div>
<div class="abs" style="left:1384px;top:108px;width:48px;height:48px;border-radius:8px;background:#30a085"></div>
<svg class="abs" style="left:1396px;top:119px" width="24" height="26" viewBox="0 0 24 26">
  <ellipse cx="12.3" cy="6.5" rx="7.6" ry="3.6" fill="none" stroke="#fff" stroke-width="1.9"/>
  <path d="M4.7,6.5 V18.5 Q4.7,22 12.3,22 Q19.9,22 19.9,18.5 V6.5" fill="none" stroke="#fff" stroke-width="1.9"/>
</svg>
<svg class="abs" style="left:1396px;top:171px" width="24" height="26" viewBox="0 0 24 26">
  <path d="M5,4 L19,22 M19,4 L5,22" stroke="#2d4358" stroke-width="1.5"/>
  <path d="M4.3,9 V3.6 H9.7 M14.3,3.6 H19.7 V9 M19.7,17 V22.4 H14.3 M9.7,22.4 H4.3 V17" stroke="#2d4358" stroke-width="1.6" fill="none"/>
</svg>
<svg class="abs" style="left:1396px;top:222px" width="24" height="26" viewBox="0 0 24 26">
  <path d="M4,9 L14,4 M4,9 L19.8,17.2 L9.8,22" stroke="#2d4358" stroke-width="1.5" fill="none"/>
  <circle cx="14" cy="3.9" r="1.9" fill="#2d4358"/><circle cx="3.8" cy="9" r="2" fill="#2d4358"/><circle cx="19.8" cy="17.2" r="2.9" fill="#2d4358"/><circle cx="9.8" cy="21.9" r="3.9" fill="#2d4358"/>
</svg>
<svg class="abs" style="left:1396px;top:275px" width="26" height="28" viewBox="0 0 26 28">
  <path d="M6.5,3 V25 M1.5,20 L6.5,25.2 L11.5,20" stroke="#2d4358" stroke-width="2" fill="none"/>
  <path d="M17.5,25 V3 M12.5,8 L17.5,2.8 L22.5,8" stroke="#2d4358" stroke-width="2" fill="none"/>
  <path d="M6.5,3 V14 M17.5,15 V25" stroke="#f8f8f8" stroke-width="2.2" stroke-dasharray="1 1.2"/>
</svg>

<!-- panel -->
<div class="abs" style="left:1444px;top:104px;width:360px;height:960px;border:1px solid #d7d8d9;border-radius:17px;background:rgba(249,249,249,0.88)"></div>
<div class="t" style="left:1465.0px;top:134.1px;font-size:25.87px;font-weight:normal;color:#2d4358;-webkit-text-stroke:0.55px #2d4358;transform:scaleX(0.9798);transform-origin:0 0;">ЗАХВАТ</div>
<div class="abs" style="left:1465px;top:194px;width:318px;height:48px;border:1px solid #d5d8db;border-radius:7px;background:#eff0f2"></div>
<div class="t" style="left:1481.9px;top:209.6px;font-size:15.99px;letter-spacing:0.00px;font-weight:normal;color:#2d4358;-webkit-text-stroke:0.2px #2d4358;">1</div>
<svg class="abs" style="left:1753px;top:214px" width="14" height="8"><path d="M0.6,0.5 H13 L6.8,6.8 Z" fill="#111"/></svg>
<div class="t" style="left:1477.6px;top:278.9px;font-size:18.60px;font-weight:normal;color:#2d4358;-webkit-text-stroke:0.3px #2d4358;transform:scaleX(0.9634);transform-origin:0 0;">ЗАХВАТ</div>
<div class="t" style="left:1638.9px;top:279.5px;font-size:16.86px;letter-spacing:-0.03px;font-weight:normal;color:#111111;-webkit-text-stroke:0.45px #111111;">Cylinder-322dda9a</div>
<div class="abs" style="left:1460px;top:320px;width:331px;height:58px;border:3px solid #e3121e"></div>
<div class="t" style="left:1478.0px;top:341.4px;font-size:18.31px;letter-spacing:0.55px;font-weight:normal;color:#2d4358;-webkit-text-stroke:0.45px #2d4358;">Один элемент</div>
<div class="abs" style="left:1719px;top:331px;width:64px;height:36px;border-radius:18px;background:#ccd2f2"></div>
<div class="abs" style="left:1750.5px;top:334.7px;width:28.4px;height:28.4px;border-radius:14.2px;background:#5e77e0"></div>
<div class="t" style="left:1477.4px;top:403.4px;font-size:18.60px;letter-spacing:0.51px;font-weight:normal;color:#2d4358;-webkit-text-stroke:0.45px #2d4358;">Точка захвата</div>
<div class="abs" style="left:1465px;top:430px;width:258px;height:48px;border:1px solid #d5d8db;border-radius:7px;background:#eff0f2"></div>
<div class="t" style="left:1482.3px;top:445.4px;font-size:16.13px;letter-spacing:0.97px;font-weight:normal;color:#2d4358;-webkit-text-stroke:0.45px #2d4358;">По умолчанию</div>
<svg class="abs" style="left:1693px;top:450px" width="14" height="8"><path d="M0.6,0.5 H13 L6.8,6.8 Z" fill="#111"/></svg>
<div class="abs" style="left:1735px;top:430px;width:48px;height:48px;border:1px solid #d5d8db;border-radius:7px;background:#f9f9f9"></div>
<svg class="abs" style="left:1751px;top:446px" width="17" height="16" viewBox="0 0 17 16"><path d="M0.8,15.2 L1.4,11.6 L9.4,3.6 L12.4,6.6 L4.4,14.6 Z M10.5,2.5 L11.9,1.1 Q12.8,0.4 13.7,1.1 L15,2.4 Q15.7,3.3 15,4.2 L13.5,5.6 Z" fill="#2d4358"/></svg>
<div class="t" style="left:1477.6px;top:520.2px;font-size:18.60px;letter-spacing:0.60px;font-weight:normal;color:#2d4358;-webkit-text-stroke:0.45px #2d4358;">Избегать заломов</div>
<div class="abs" style="left:1718px;top:510px;width:65px;height:36px;border-radius:18px;background:#d3d6da"></div>
<div class="abs" style="left:1722px;top:513.8px;width:28.4px;height:28.4px;border-radius:14.2px;background:#ffffff"></div>
<div class="t" style="left:1476.9px;top:569.8px;font-size:18.46px;letter-spacing:0.80px;font-weight:normal;color:#2d4358;-webkit-text-stroke:0.45px #2d4358;">Пропускать</div>
<div class="t" style="left:1476.9px;top:595.4px;font-size:18.46px;letter-spacing:1.09px;font-weight:normal;color:#2d4358;-webkit-text-stroke:0.45px #2d4358;">недостижимые</div>
<div class="t" style="left:1476.8px;top:618.7px;font-size:18.46px;letter-spacing:1.58px;font-weight:normal;color:#2d4358;-webkit-text-stroke:0.45px #2d4358;">позиции</div>
<div class="abs" style="left:1718px;top:585px;width:65px;height:36px;border-radius:18px;background:#d3d6da"></div>
<div class="abs" style="left:1722px;top:588.6px;width:28.4px;height:28.4px;border-radius:14.2px;background:#ffffff"></div>

<!-- speed slider -->
<div class="abs" style="left:1840px;top:104px;width:64px;height:930px;border-radius:32px 32px 0 0;background:#e0e0e0"></div>
<div class="abs" style="left:1844.2px;top:107.8px;width:56px;height:56px;border-radius:28px;background:#d9dcdb"></div>
<div class="abs" style="left:1845px;top:353.2px;width:7px;height:2px;background:#5f6f7d"></div>
<div class="abs" style="left:1892px;top:353.2px;width:7px;height:2px;background:#5f6f7d"></div>
<div class="t" style="left:1856.5px;top:346.8px;font-size:16.86px;font-weight:normal;color:#6f7e8b;transform:scaleX(0.9096);transform-origin:0 0;">75%</div>
<div class="abs" style="left:1845px;top:583.7px;width:7px;height:2px;background:#5f6f7d"></div>
<div class="abs" style="left:1892px;top:583.7px;width:7px;height:2px;background:#5f6f7d"></div>
<div class="t" style="left:1856.5px;top:578.3px;font-size:16.86px;font-weight:normal;color:#6f7e8b;transform:scaleX(0.9096);transform-origin:0 0;">50%</div>
<div class="abs" style="left:1845px;top:814.2px;width:7px;height:2px;background:#5f6f7d"></div>
<div class="abs" style="left:1892px;top:814.2px;width:7px;height:2px;background:#5f6f7d"></div>
<div class="t" style="left:1856.5px;top:807.8px;font-size:16.86px;font-weight:normal;color:#6f7e8b;transform:scaleX(0.9096);transform-origin:0 0;">25%</div>
<svg class="abs" style="left:1884px;top:640px" width="34" height="52" viewBox="0 0 34 52"><path d="M24,9 L10,26 L24,43" stroke="#cccccc" stroke-width="6.5" fill="none" stroke-linecap="round" stroke-linejoin="round"/></svg>
<div class="abs" style="left:1840px;top:1000px;width:64px;height:64px;border-radius:32px;background:#d3dadd;border:1px solid #33a487"></div>
<div class="abs" style="left:1844.8px;top:1004.8px;width:54.4px;height:54.4px;border-radius:27.2px;background:#f9f9f9"></div>
<svg class="abs" style="left:1862px;top:1024px" width="20" height="16"><path d="M10.1,2.3 L18,13.8 H2.3 Z" fill="#2d4358"/></svg>

</body></html>
